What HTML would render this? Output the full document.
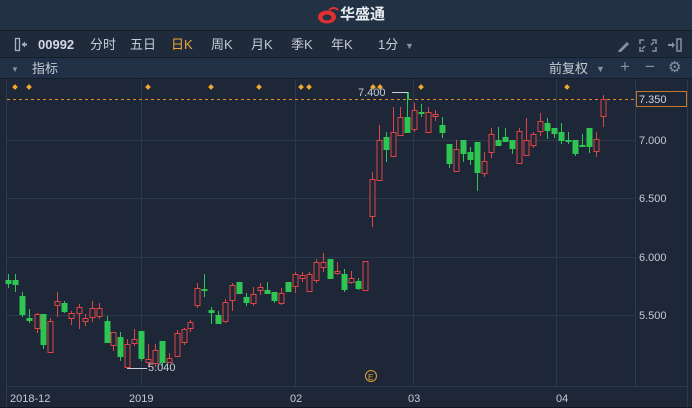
<!DOCTYPE html>
<html><head><meta charset="utf-8">
<style>
*{margin:0;padding:0;box-sizing:border-box}
body{width:692px;height:408px;background:#1d2737;overflow:hidden;font-family:"Liberation Sans","Noto Sans CJK SC",sans-serif;position:relative;color:#c5ccd6}
.title{position:absolute;left:0;top:0;width:692px;height:31px;background:#233145;border-bottom:1px solid #151d29}
.tb{position:absolute;left:0;top:31px;width:692px;height:27px;background:#1f2a3b;border-bottom:1px solid #151d29}
.ib{position:absolute;left:0;top:58px;width:692px;height:21px;background:#223046;border-bottom:1px solid #151d29}
.t{position:absolute;font-size:13px;line-height:15px;white-space:nowrap}
</style></head><body>
<div class="title">
 <svg style="position:absolute;left:317px;top:7px" width="22" height="18" viewBox="0 0 22 18"><ellipse cx="10" cy="10" rx="9" ry="6.5" fill="#e03030"/><ellipse cx="10" cy="10.5" rx="4.5" ry="3" fill="#233145"/><path d="M12 3 Q17 -1 21 3" stroke="#e03030" stroke-width="2" fill="none"/></svg>
 <div class="t" style="left:340px;top:7px;font-size:15px;font-weight:bold;color:#e8ecf2">华盛通</div>
</div>
<div class="tb">
 <svg style="position:absolute;left:14px;top:6px" width="16" height="15"><rect x="1.5" y="1.5" width="4" height="12" fill="none" stroke="#aab2be" stroke-width="1.3"/><path d="M8 7.5h5" stroke="#aab2be" stroke-width="2"/><path d="M11 4.5l-3 3 3 3z" fill="#aab2be"/></svg>
 <div class="t" style="left:38px;top:6px;font-weight:bold;color:#d4dae3">00992</div>
 <div class="t" style="left:90px;top:6px">分时</div>
 <div class="t" style="left:130px;top:6px">五日</div>
 <div class="t" style="left:171px;top:6px;color:#e8a93a">日K</div>
 <div class="t" style="left:211px;top:6px">周K</div>
 <div class="t" style="left:251px;top:6px">月K</div>
 <div class="t" style="left:291px;top:6px">季K</div>
 <div class="t" style="left:331px;top:6px">年K</div>
 <div class="t" style="left:378px;top:6px">1分</div>
 <div class="t" style="left:405px;top:8px;font-size:9px;color:#8891a0">▼</div>
 <svg style="position:absolute;left:616px;top:6px" width="70" height="16"><path d="M3 13 L11 5 L13 7 L5 15 L2 15Z" fill="#8891a0"/><g stroke="#8891a0" stroke-width="1.5" fill="none"><path d="M28 3h-4v4M36 3h4v4M28 14h-4v-4M36 14h4v-4"/><path d="M26 12l3-3M38 5l-3 3"/></g><path d="M52 8h5" stroke="#8891a0" stroke-width="2"/><path d="M56 5l3 3-3 3z" fill="#8891a0"/><rect x="61" y="2" width="4" height="12" fill="none" stroke="#8891a0" stroke-width="1.5"/></svg>
</div>
<div class="ib">
 <div class="t" style="left:11px;top:4px;font-size:8px;color:#8891a0">▼</div>
 <div class="t" style="left:32px;top:3px">指标</div>
 <div class="t" style="left:549px;top:3px">前复权</div>
 <div class="t" style="left:596px;top:4px;font-size:9px;color:#8891a0">▼</div>
 <div class="t" style="left:620px;top:1px;font-size:17px;color:#8891a0">+</div>
 <div class="t" style="left:645px;top:1px;font-size:17px;color:#8891a0">−</div>
 <div class="t" style="left:668px;top:2px;font-size:15px;color:#8891a0">⚙</div>
</div>
<svg id="ch" style="position:absolute;left:0;top:79px" width="692" height="329"></svg>
<script>
var s='';
function L(x1,y1,x2,y2,c,w,d){s+='<line x1="'+x1+'" y1="'+y1+'" x2="'+x2+'" y2="'+y2+'" stroke="'+c+'" stroke-width="'+(w||1)+'"'+(d?' stroke-dasharray="'+d+'"':'')+'/>';}
var o=-79;
L(6.5,0,6.5,329,'#2d3a4e');L(635.5,0,635.5,307,'#2d3a4e');L(687.5,0,687.5,329,'#2d3a4e');
L(7,307.5,687,307.5,'#2d3a4e');L(0,328.5,692,328.5,'#111820');
[140,198,257,315].forEach(function(y){L(7,y+o+.5,635,y+o+.5,'#2b394c');});
[141,295,413,556].forEach(function(x){L(x+.5,0,x+.5,307,'#2b394c');});
L(7,99+o+.5,635,99+o+.5,'#e08a28',1,'3,3');
var c=[
[8,'g',280,284,274,288],[15,'g',280,285,274,292],[22,'g',296,315,292,317],[29,'g',318,321,309,323],[37,'r',314,329,313,333],[43,'g',314,345,314,349],[50,'r',321,353,318,353],[57,'r',301,306,292,317],[64,'g',303,312,301,313],[71,'r',313,319,311,325],[79,'r',307,314,304,329],[85,'r',318,322,314,326],[92,'r',308,318,301,322],[99,'r',308,317,303,319],[107,'g',321,343,316,343],[113,'r',332,346,332,351],[120,'g',337,357,332,361],[127,'r',344,368,339,368],[134,'r',339,344,329,346],[141,'g',331,359,331,361],[148,'r',359,363,344,367],[155,'r',350,364,344,367],[162,'g',341,363,341,366],[169,'r',358,363,353,363],[177,'r',333,357,330,357],[184,'r',329,343,328,345],[190,'r',322,329,320,332],[197,'r',288,306,283,308],[204,'g',289,291,274,297],[211,'g',310,313,307,324],[218,'g',315,324,311,324],[225,'r',302,322,299,323],[232,'r',285,301,283,311],[239,'g',282,294,282,294],[246,'g',297,303,293,306],[253,'r',294,304,287,306],[260,'r',287,291,283,295],[267,'g',290,294,282,294],[274,'g',292,301,292,303],[281,'r',293,304,288,305],[288,'g',282,292,282,292],[295,'r',274,287,272,293],[302,'r',275,279,272,282],[309,'r',274,292,272,292],[316,'r',262,281,259,283],[323,'r',262,268,253,272],[330,'g',259,279,259,279],[337,'r',271,274,262,275],[344,'g',274,290,269,292],[351,'r',278,283,271,284],[358,'g',281,289,278,290],[365,'r',261,291,261,291],
[372,'r',179,217,172,227],[379,'r',140,181,125,181],[386,'g',137,150,132,162],[393,'r',132,157,107,157],[400,'r',117,136,107,136],[407,'g',117,133,92,133],[414,'r',110,130,103,132],[421,'g',112,114,104,117],[428,'r',112,133,107,133],[435,'r',114,117,110,121],[442,'g',125,133,117,138],[449,'g',144,164,144,168],[456,'r',149,172,140,172],[463,'g',140,154,140,162],[470,'g',152,160,147,165],[477,'g',142,173,142,191],[484,'r',161,174,152,177],[491,'r',134,153,128,158],[498,'g',140,146,127,146],[505,'g',137,142,128,142],[512,'g',140,149,140,154],[519,'r',131,164,128,164],[526,'r',140,156,118,156],[533,'r',134,146,132,148],[540,'r',121,132,113,136],[547,'g',123,131,118,139],[554,'g',128,134,128,138],[561,'g',132,141,123,144],[568,'g',140,142,132,144],[575,'g',140,154,140,156],[582,'g',145,147,134,147],[589,'g',128,147,128,153],[596,'r',139,152,132,157],[603,'r',99,117,95,127]];
c.forEach(function(k){var x=k[0],col=k[1]=='g'?'#2fc552':'#e04444';
L(x+.5,k[4]+o,x+.5,k[5]+o,col);
var h=Math.max(k[3]-k[2],1);
if(k[1]=='g')s+='<rect x="'+(x-2.5)+'" y="'+(k[2]+o)+'" width="6" height="'+h+'" fill="'+col+'"/>';
else s+='<rect x="'+(x-2)+'" y="'+(k[2]+o+.5)+'" width="5" height="'+(h-1)+'" fill="#1d2737" stroke="'+col+'"/>';});
[15,29,148,211,259,301,309,373,380,421,567].forEach(function(x){s+='<rect x="'+(x-2)+'" y="'+(85+o)+'" width="4" height="4" fill="#f0a830" transform="rotate(45 '+x+' '+(87+o)+')"/>';});
L(392,92+o+.5,408,92+o+.5,'#c8d0da');L(408.5,92+o,408.5,100+o,'#2fc552');
L(127,368+o+.5,147,368+o+.5,'#c8d0da');
function T(x,y,t,col,sz){s+='<text x="'+x+'" y="'+(y+o)+'" fill="'+(col||'#c5ccd6')+'" font-size="'+(sz||11)+'" font-family="Liberation Sans,sans-serif">'+t+'</text>';}
T(358,96,'7.400');T(148,371,'5.040');
T(639,144,'7.000');T(639,202,'6.500');T(639,261,'6.000');T(639,319,'5.500');
s+='<rect x="636.5" y="'+(91+o+.5)+'" width="50" height="15" fill="#1d2737" stroke="#c07a2a"/>';
T(639,103,'7.350','#d0d6df');
T(10,402,'2018-12');T(129,402,'2019');T(290,402,'02');T(408,402,'03');T(556,402,'04');
s+='<circle cx="371" cy="'+(376+o)+'" r="5.5" fill="none" stroke="#e0a030"/>';T(368,380,'E','#e0a030',8);
document.getElementById('ch').innerHTML=s;
</script>
</body></html>
